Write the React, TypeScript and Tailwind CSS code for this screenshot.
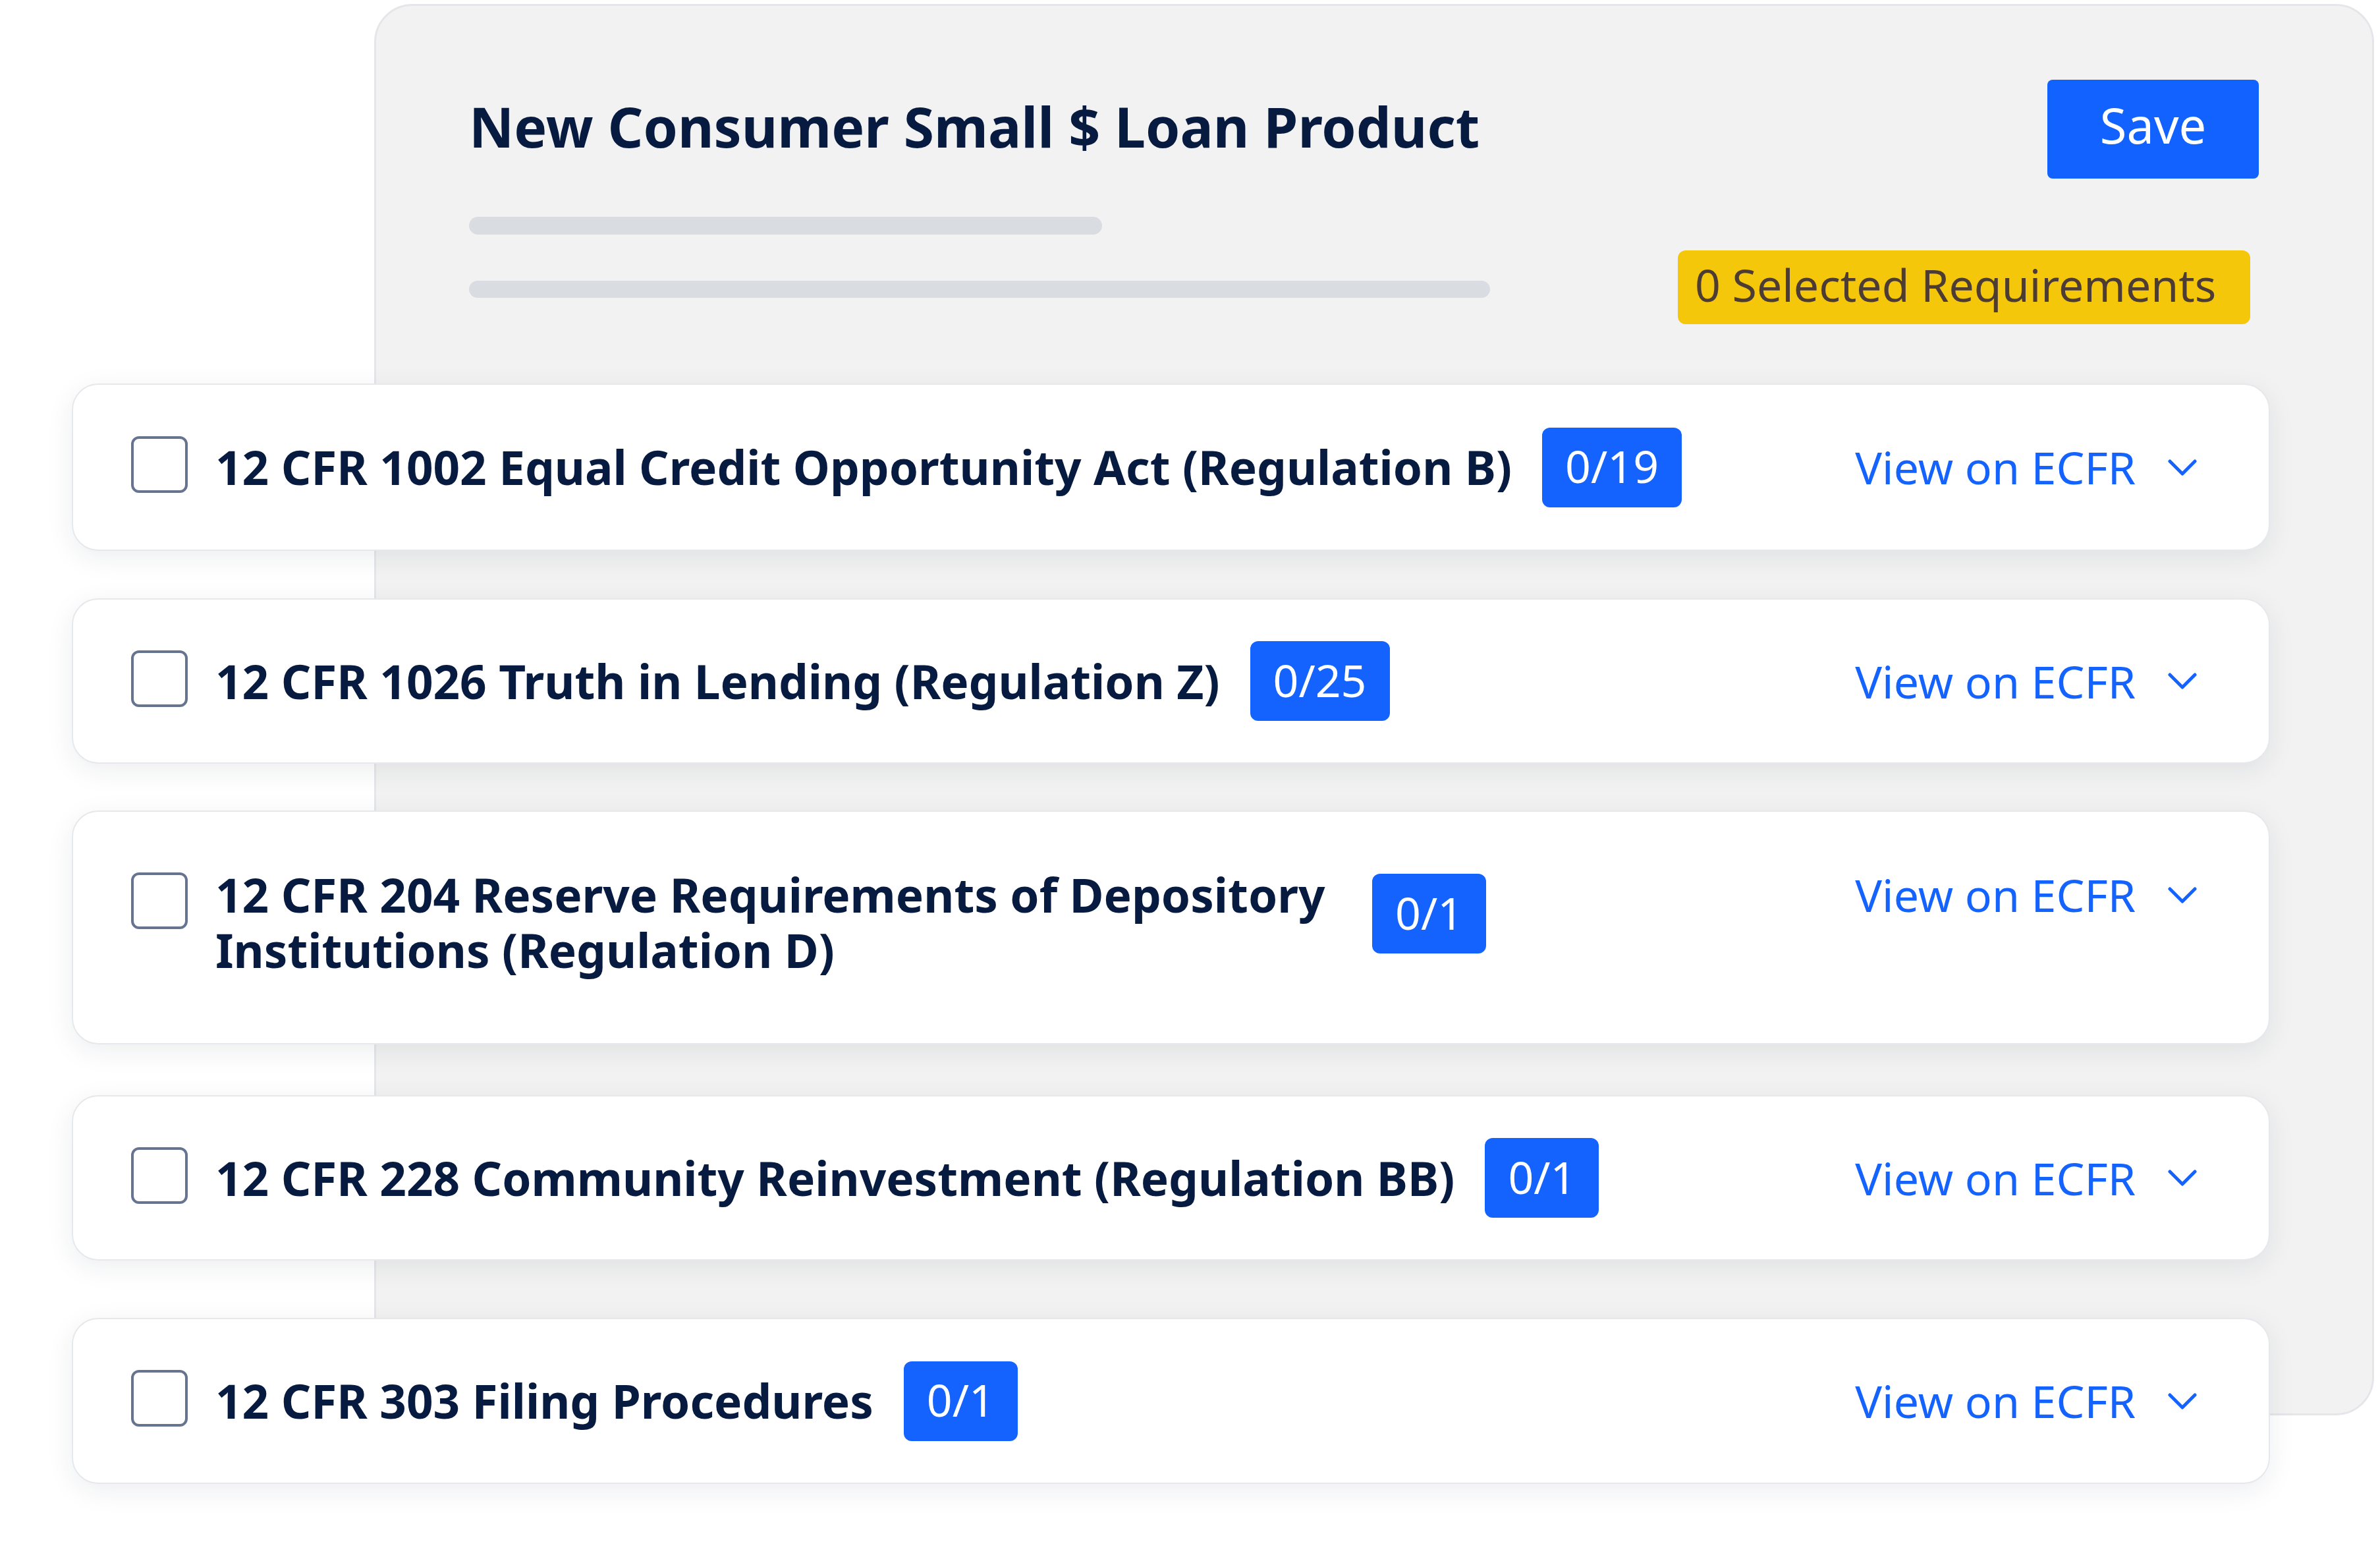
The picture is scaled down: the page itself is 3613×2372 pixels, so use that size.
import React from "react";

type Req = {
  title: string;
  count: string;
  h: string;
  mt: string;
  multi?: boolean;
};

const reqs: Req[] = [
  { title: "12 CFR 1002 Equal Credit Opportunity Act (Regulation B)", count: "0/19", h: "h-[254px]", mt: "mt-0" },
  { title: "12 CFR 1026 Truth in Lending (Regulation Z)", count: "0/25", h: "h-[251px]", mt: "mt-[72px]" },
  { title: "12 CFR 204 Reserve Requirements of Depository Institutions (Regulation D)", count: "0/1", h: "h-[355px]", mt: "mt-[71px]", multi: true },
  { title: "12 CFR 228 Community Reinvestment (Regulation BB)", count: "0/1", h: "h-[251px]", mt: "mt-[77px]" },
  { title: "12 CFR 303 Filing Procedures", count: "0/1", h: "h-[252px]", mt: "mt-[87px]" },
];

function Chevron() {
  return (
    <svg width="44" height="25" viewBox="0 0 44 25" fill="none" className="shrink-0">
      <polyline points="3,3 22,22 41,3" stroke="#1463ff" strokeWidth="5" strokeLinecap="round" strokeLinejoin="round" />
    </svg>
  );
}

function Badge({ text, className }: { text: string; className?: string }) {
  return (
    <div className={"h-[121px] px-[35px] pb-[4px] rounded-[12px] bg-[#1463ff] text-white text-[68px] leading-none flex items-center shrink-0 " + (className ?? "ml-[46px]")}>
      {text}
    </div>
  );
}

function Card({ r }: { r: Req }) {
  if (r.multi) {
    return (
      <div className={`${r.h} ${r.mt} rounded-[40px] border-2 border-[#e7e8ec] bg-white shadow-[0_10px_40px_rgba(30,40,70,0.08)] flex justify-between items-start pl-[88px] pr-[109px]`}>
        <div className="flex items-start">
          <div className="mt-[92px] w-[86px] h-[86px] rounded-[12px] border-[4px] border-[#66748f] shrink-0" />
          <div className="mt-[84px] ml-[42px] w-[1709px] text-[71px] leading-[84px] font-bold text-[#071a40]">{r.title}</div>
          <Badge text={r.count} className="mt-[94px] ml-[47px]" />
        </div>
        <div className="mt-[75px] flex items-center gap-[49px]">
          <span className="text-[68px] leading-normal text-[#1463ff]">View on ECFR</span>
          <Chevron />
        </div>
      </div>
    );
  }
  return (
    <div className={`${r.h} ${r.mt} rounded-[40px] border-2 border-[#e7e8ec] bg-white shadow-[0_10px_40px_rgba(30,40,70,0.08)] flex justify-between items-center pl-[88px] pr-[109px]`}>
      <div className="flex items-center">
        <div className="w-[86px] h-[86px] rounded-[12px] border-[4px] border-[#66748f] shrink-0 -translate-y-[4px]" />
        <div className="ml-[42px] text-[71px] leading-[84px] font-bold text-[#071a40] whitespace-nowrap">{r.title}</div>
        <Badge text={r.count} />
      </div>
      <div className="flex items-center gap-[49px]">
        <span className="text-[68px] leading-normal text-[#1463ff]">View on ECFR</span>
        <Chevron />
      </div>
    </div>
  );
}

export default function App() {
  return (
    <div
      className="w-[3613px] h-[2372px] bg-white overflow-hidden pt-[6px]"
      style={{ fontFamily: '"Noto Sans", "Open Sans", sans-serif' }}
    >
      <div className="ml-[568px] w-[3036px] h-[2142px] rounded-[58px] border-[3px] border-[#e5e6ea] bg-[#f2f2f2] pt-[112px] pl-[141px] pr-[172px]">
        <div className="flex justify-between items-start">
          <h1 className="mt-[14px] text-[84px] leading-[113px] font-bold text-[#071a40]">New Consumer Small $ Loan Product</h1>
          <button className="w-[321px] h-[150px] pb-[12px] rounded-[8px] bg-[#1262ff] text-white text-[74px] leading-none flex items-center justify-center">
            Save
          </button>
        </div>
        <div className="mt-[58px] flex justify-between items-start">
          <div className="flex flex-col">
            <div className="h-[27px] w-[961px] rounded-full bg-[#d9dde1]" />
            <div className="mt-[70px] h-[26px] w-[1550px] rounded-full bg-[#d9dde1]" />
          </div>
          <div className="mt-[51px] mr-[13px] w-[869px] h-[112px] pb-[8px] rounded-[12px] bg-[#f5c70a] text-[68px] leading-none text-[#4d3c33] pl-[26px] flex items-center">
            0 Selected Requirements
          </div>
        </div>
      </div>
      <div className="relative -mt-[1566px] ml-[109px] w-[3337px] flex flex-col">
        {reqs.map((r) => (
          <Card key={r.title} r={r} />
        ))}
      </div>
    </div>
  );
}
